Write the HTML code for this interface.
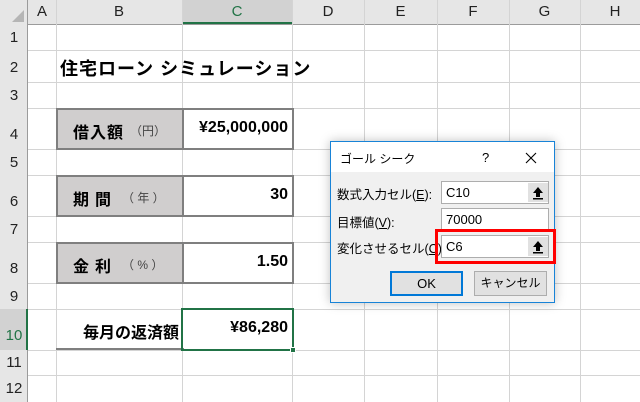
<!DOCTYPE html>
<html><head><meta charset="utf-8"><style>
*{margin:0;padding:0;box-sizing:border-box}
body{width:640px;height:402px;overflow:hidden;background:#fff;position:relative;font-family:"Liberation Sans","Noto Sans CJK JP",sans-serif}
.a{position:absolute}
.hl{position:absolute;left:0;width:640px;height:1px;background:#d4d4d4}
.vl{position:absolute;top:0;height:402px;width:1px;background:#d4d4d4}
.ch{position:absolute;top:0;height:24px;line-height:24px;text-align:center;font-size:15px;color:#222}
.rh{position:absolute;left:0;width:28px;text-align:center;font-size:15px;color:#222}
.box{position:absolute;border:2px solid #7f7f7f}
.lbl{background:#d0cece}
.b{font-weight:bold;font-size:16px;color:#000}
.s{position:absolute;font-size:12px;color:#444}
</style></head><body>
<div class="a" style="left:0;top:0;width:640px;height:25px;background:#e6e6e6;border-bottom:1px solid #9b9b9b"></div>
<div class="a" style="left:182px;top:0;width:110px;height:24px;background:#d2d2d2;border-bottom:2px solid #217346"></div>
<div class="hl" style="top:50px"></div><div class="hl" style="top:82px"></div><div class="hl" style="top:108px"></div>
<div class="hl" style="top:149px"></div><div class="hl" style="top:175px"></div><div class="hl" style="top:216px"></div>
<div class="hl" style="top:242px"></div><div class="hl" style="top:283px"></div><div class="hl" style="top:309px"></div>
<div class="hl" style="top:350px"></div><div class="hl" style="top:375px"></div>
<div class="vl" style="left:56px"></div><div class="vl" style="left:182px"></div><div class="vl" style="left:292px"></div>
<div class="vl" style="left:364px"></div><div class="vl" style="left:437px"></div><div class="vl" style="left:509px"></div><div class="vl" style="left:580px"></div>
<div class="a" style="left:0;top:0;width:28px;height:402px;background:#e6e6e6;border-right:1px solid #9b9b9b"></div>
<div class="a" style="left:0;top:309px;width:28px;height:41px;background:#d2d2d2;border-right:2px solid #217346"></div>
<svg class="a" style="left:10px;top:8px" width="16" height="16"><polygon points="14,2 14,14 2,14" fill="#b5b5b5"/></svg>
<div class="ch" style="left:28px;width:28px">A</div><div class="ch" style="left:56px;width:126px">B</div>
<div class="ch" style="left:182px;width:110px;color:#217346">C</div><div class="ch" style="left:292px;width:72px">D</div>
<div class="ch" style="left:364px;width:73px">E</div><div class="ch" style="left:437px;width:72px">F</div>
<div class="ch" style="left:509px;width:71px">G</div><div class="ch" style="left:580px;width:70px">H</div>
<div class="rh" style="top:29px">1</div><div class="rh" style="top:59px">2</div><div class="rh" style="top:87px">3</div>
<div class="rh" style="top:126px">4</div><div class="rh" style="top:154px">5</div><div class="rh" style="top:193px">6</div>
<div class="rh" style="top:221px">7</div><div class="rh" style="top:260px">8</div><div class="rh" style="top:288px">9</div>
<div class="rh" style="top:327px;color:#217346">10</div><div class="rh" style="top:354px">11</div><div class="rh" style="top:380px">12</div>

<div class="a b" style="left:60px;top:55px;font-size:18px;letter-spacing:1px">住宅ローン シミュレーション</div>

<div class="box lbl" style="left:56px;top:108px;width:128px;height:42px"></div>
<div class="box" style="left:182px;top:108px;width:112px;height:42px;border-left:none"></div>
<div class="a" style="left:182px;top:110px;width:1px;height:38px;background:#7f7f7f"></div>
<div class="a b" style="left:73px;top:119px;letter-spacing:1px">借入額</div><div class="s" style="left:130px;top:122px">（円）</div>
<div class="a b" style="left:182px;top:119px;width:106px;text-align:right">¥25,000,000</div>

<div class="box lbl" style="left:56px;top:175px;width:128px;height:42px"></div>
<div class="box" style="left:182px;top:175px;width:112px;height:42px;border-left:none"></div>
<div class="a" style="left:182px;top:177px;width:1px;height:38px;background:#7f7f7f"></div>
<div class="a b" style="left:73px;top:186px">期</div><div class="a b" style="left:95px;top:186px">間</div>
<div class="s" style="left:122px;top:189px">（ 年 ）</div>
<div class="a b" style="left:182px;top:186px;width:106px;text-align:right">30</div>

<div class="box lbl" style="left:56px;top:242px;width:128px;height:42px"></div>
<div class="box" style="left:182px;top:242px;width:112px;height:42px;border-left:none"></div>
<div class="a" style="left:182px;top:244px;width:1px;height:38px;background:#7f7f7f"></div>
<div class="a b" style="left:73px;top:253px">金</div><div class="a b" style="left:95px;top:253px">利</div>
<div class="s" style="left:122px;top:256px">（ % ）</div>
<div class="a b" style="left:182px;top:253px;width:106px;text-align:right">1.50</div>

<div class="a" style="left:56px;top:348px;width:128px;height:2px;background:#7f7f7f"></div>
<div class="a b" style="left:56px;top:319px;width:123px;text-align:right">毎月の返済額</div>
<div class="a" style="left:181px;top:308px;width:113px;height:43px;border:2px solid #217346"></div>
<div class="a" style="left:290px;top:347px;width:6px;height:6px;background:#217346;border:1px solid #fff"></div>
<div class="a b" style="left:182px;top:319px;width:106px;text-align:right">¥86,280</div>

<div class="a" style="left:330px;top:141px;width:225px;height:162px;background:#f0f0f0;border:1px solid #1883d7;box-shadow:0 0 10px rgba(0,0,0,.25)">
<div class="a" style="left:0;top:0;width:223px;height:30px;background:#fff"></div>
<div class="a" style="left:9px;top:8px;font-size:12px;color:#000">ゴール シーク</div>
<div class="a" style="left:151px;top:8px;font-size:13px">?</div>
<svg class="a" style="left:194px;top:10px" width="12" height="12"><path d="M1 1L11 11M11 1L1 11" stroke="#000" stroke-width="1.1"/></svg>
<div class="a" style="left:6px;top:42px;font-size:12.5px">数式入力セル(<u>E</u>):</div>
<div class="a" style="left:6px;top:70px;font-size:12.5px">目標値(<u>V</u>):</div>
<div class="a" style="left:6px;top:96px;font-size:12.5px">変化させるセル(<u>C</u>):</div>
<div class="a" style="left:110px;top:39px;width:108px;height:23px;background:#fff;border:1px solid #adadad"><span class="a" style="left:4px;top:3px;font-size:13px">C10</span><div class="a" style="left:86px;top:1px;width:20px;height:19px;background:#e1e1e1"><svg width="20" height="19"><path d="M10 4L5 10H8V14H12V10H15Z" fill="#000"/><rect x="5" y="15" width="10" height="1.5" fill="#000"/></svg></div></div>
<div class="a" style="left:110px;top:66px;width:108px;height:23px;background:#fff;border:1px solid #adadad"><span class="a" style="left:4px;top:3px;font-size:13px">70000</span></div>
<div class="a" style="left:104px;top:87px;width:121px;height:35px;border:3px solid #f00"></div>
<div class="a" style="left:110px;top:93px;width:108px;height:23px;background:#fff;border:1px solid #adadad"><span class="a" style="left:4px;top:3px;font-size:13px">C6</span><div class="a" style="left:86px;top:1px;width:20px;height:19px;background:#e1e1e1"><svg width="20" height="19"><path d="M10 4L5 10H8V14H12V10H15Z" fill="#000"/><rect x="5" y="15" width="10" height="1.5" fill="#000"/></svg></div></div>
<div class="a" style="left:59px;top:129px;width:73px;height:25px;background:#e1e1e1;border:2px solid #0078d7;font-size:13px;text-align:center;line-height:21px">OK</div>
<div class="a" style="left:143px;top:129px;width:73px;height:25px;background:#e1e1e1;border:1px solid #adadad;font-size:12px;text-align:center;line-height:23px">キャンセル</div>
</div>
</body></html>
